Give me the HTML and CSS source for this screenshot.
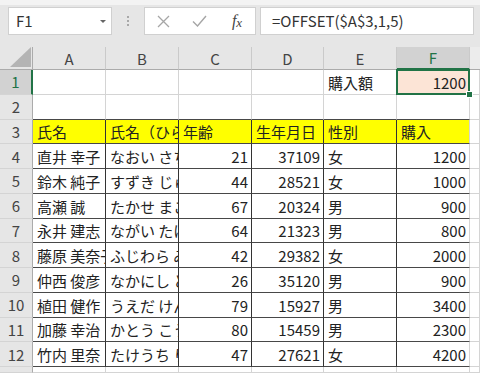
FILE: index.html
```html
<!DOCTYPE html>
<html lang="ja">
<head>
  <meta charset="UTF-8">
  <meta name="viewport" content="width=device-width, initial-scale=1.0">
  <title>OFFSET</title>
  <link rel="stylesheet" href="styles.css">
</head>
<body>
  <!-- Formula bar -->
  <div class="formulaBar">
    <div class="nameBox">F1<span class="arrow"></span></div>
    <div class="grip"><i></i><i></i><i></i></div>
    <div class="fxBox">
      <span class="btn">
        <svg width="13" height="13" viewBox="0 0 13 13"><path d="M1 1L12 12M12 1L1 12" stroke="#a6a6a6" stroke-width="1.3" fill="none"/></svg>
      </span>
      <span class="btn">
        <svg width="15" height="12" viewBox="0 0 15 12"><path d="M1 6.5L5.5 11L14 1" stroke="#a6a6a6" stroke-width="1.4" fill="none"/></svg>
      </span>
      <span class="btn fx">f<span>x</span></span>
    </div>
    <div class="formula">=OFFSET($A$3,1,5)</div>
  </div>

  <!-- Sheet -->
  <div class="sheet">
    <div class="corner"><svg width="21" height="20" viewBox="0 0 21 20"><polygon points="21,0 21,20 0,20" fill="#b4b4b4"/></svg></div>
    <div class="hd">A</div>
    <div class="hd">B</div>
    <div class="hd">C</div>
    <div class="hd">D</div>
    <div class="hd">E</div>
    <div class="hd active">F</div>
    <div class="hd last"></div>

    <div class="rh active">1</div>
    <div class="c"></div>
    <div class="c"></div>
    <div class="c"></div>
    <div class="c"></div>
    <div class="c">購入額</div>
    <div class="c num sel">1200</div>
    <div class="c"></div>

    <div class="rh">2</div>
    <div class="c bb"></div>
    <div class="c bb"></div>
    <div class="c bb"></div>
    <div class="c bb"></div>
    <div class="c bb"></div>
    <div class="c bb"></div>
    <div class="c"></div>

    <div class="rh">3</div>
    <div class="c bx yl">氏名</div>
    <div class="c bx yl">氏名（ひらがな）</div>
    <div class="c bx yl">年齢</div>
    <div class="c bx yl">生年月日</div>
    <div class="c bx yl">性別</div>
    <div class="c bb yl">購入</div>
    <div class="c"></div>

    <div class="rh">4</div>
    <div class="c bx">直井 幸子</div>
    <div class="c bx">なおい さちこ</div>
    <div class="c bx num">21</div>
    <div class="c bx num">37109</div>
    <div class="c bx">女</div>
    <div class="c bb num">1200</div>
    <div class="c"></div>

    <div class="rh">5</div>
    <div class="c bx">鈴木 純子</div>
    <div class="c bx">すずき じゅんこ</div>
    <div class="c bx num">44</div>
    <div class="c bx num">28521</div>
    <div class="c bx">女</div>
    <div class="c bb num">1000</div>
    <div class="c"></div>

    <div class="rh">6</div>
    <div class="c bx">高瀬 誠</div>
    <div class="c bx">たかせ まこと</div>
    <div class="c bx num">67</div>
    <div class="c bx num">20324</div>
    <div class="c bx">男</div>
    <div class="c bb num">900</div>
    <div class="c"></div>

    <div class="rh">7</div>
    <div class="c bx">永井 建志</div>
    <div class="c bx">ながい たけし</div>
    <div class="c bx num">64</div>
    <div class="c bx num">21323</div>
    <div class="c bx">男</div>
    <div class="c bb num">800</div>
    <div class="c"></div>

    <div class="rh">8</div>
    <div class="c bx">藤原 美奈子</div>
    <div class="c bx">ふじわら みなこ</div>
    <div class="c bx num">42</div>
    <div class="c bx num">29382</div>
    <div class="c bx">女</div>
    <div class="c bb num">2000</div>
    <div class="c"></div>

    <div class="rh">9</div>
    <div class="c bx">仲西 俊彦</div>
    <div class="c bx">なかにし としひこ</div>
    <div class="c bx num">26</div>
    <div class="c bx num">35120</div>
    <div class="c bx">男</div>
    <div class="c bb num">900</div>
    <div class="c"></div>

    <div class="rh">10</div>
    <div class="c bx">植田 健作</div>
    <div class="c bx">うえだ けんさく</div>
    <div class="c bx num">79</div>
    <div class="c bx num">15927</div>
    <div class="c bx">男</div>
    <div class="c bb num">3400</div>
    <div class="c"></div>

    <div class="rh">11</div>
    <div class="c bx">加藤 幸治</div>
    <div class="c bx">かとう こうじ</div>
    <div class="c bx num">80</div>
    <div class="c bx num">15459</div>
    <div class="c bx">男</div>
    <div class="c bb num">2300</div>
    <div class="c"></div>

    <div class="rh">12</div>
    <div class="c bx">竹内 里奈</div>
    <div class="c bx">たけうち りな</div>
    <div class="c bx num">47</div>
    <div class="c bx num">27621</div>
    <div class="c bx">女</div>
    <div class="c bb num">4200</div>
    <div class="c"></div>

    <div class="rh"></div>
    <div class="c"></div>
    <div class="c"></div>
    <div class="c"></div>
    <div class="c"></div>
    <div class="c"></div>
    <div class="c"></div>
    <div class="c"></div>
  </div>
</body>
</html>
```

FILE: styles.css
```css
/* General */
body {
  margin: 0;
  width: 480px;
  height: 373px;
  overflow: hidden;
  background: #fff;
  font-family: "Noto Sans CJK JP", "Noto Sans", sans-serif;
  color: #222;
}

/* Formula bar */
.formulaBar {
  display: flex;
  align-items: flex-start;
  height: 40px;
  padding: 2px 6px 0 8px;
  border-top: 5px solid #f3f3f3;
  background: #e6e6e6;
}

.nameBox,
.fxBox,
.formula {
  box-sizing: border-box;
  height: 28px;
  background: #fff;
  border: 1px solid #d0d0d0;
}

.nameBox {
  position: relative;
  width: 104px;
  padding-left: 7px;
  font-size: 15px;
  line-height: 26px;
  color: #333;
}

.arrow {
  position: absolute;
  right: 5px;
  top: 12px;
  border-left: 3px solid transparent;
  border-right: 3px solid transparent;
  border-top: 3px solid #666;
}

.grip {
  width: 32px;
  height: 28px;
  display: flex;
  flex-direction: column;
  align-items: center;
  justify-content: center;
  gap: 2px;
}

.grip i {
  width: 2px;
  height: 2px;
  background: #a8a8a8;
}

.fxBox {
  width: 112px;
  display: flex;
  align-items: center;
}

.btn {
  width: 37px;
  display: flex;
  justify-content: center;
  align-items: center;
}

.fx {
  font-family: "Liberation Serif", serif;
  font-style: italic;
  font-size: 16px;
  color: #444;
  padding-left: 2px;
}

.fx span {
  font-size: 13px;
  position: relative;
  top: 2px;
}

.formula {
  flex: 1;
  margin-left: 4px;
  padding-left: 11px;
  font-size: 15px;
  line-height: 25px;
  color: #333;
}

/* Sheet grid */
.sheet {
  display: grid;
  grid-template-columns: 33px 73px 73px 73px 72px 73px 73px 1fr;
  grid-template-rows: 23px repeat(12, 24.75px) 1fr;
  height: 326px;
  font-size: 15px;
}

.corner {
  display: flex;
  justify-content: flex-end;
  align-items: flex-end;
  padding: 0 1px 2px 0;
  background: #e6e6e6;
  border-right: 1px solid #ababab;
  border-bottom: 1px solid #ababab;
}

.hd {
  display: flex;
  justify-content: center;
  align-items: center;
  background: #e6e6e6;
  color: #444;
  border-right: 1px solid #cacaca;
  border-bottom: 1px solid #ababab;
}

.hd.last {
  border-right: none;
  background: #ececec;
}

.hd.active {
  background: #d2d2d2;
  color: #217346;
  border-bottom: 2px solid #217346;
}

.rh {
  display: flex;
  justify-content: center;
  align-items: center;
  background: #e6e6e6;
  color: #444;
  border-right: 1px solid #ababab;
  border-bottom: 1px solid #d4d4d4;
}

.rh.active {
  background: #d2d2d2;
  color: #217346;
  border-right: 2px solid #217346;
}

.sheet > div {
  box-sizing: border-box;
  min-width: 0;
  min-height: 0;
}

.c {
  display: flex;
  align-items: center;
  padding: 1px 3px 0 4px;
  overflow: hidden;
  white-space: nowrap;
  border-right: 1px solid #d4d4d4;
  border-bottom: 1px solid #d4d4d4;
}

.num {
  justify-content: flex-end;
}

/* Table borders */
.bx {
  border-right-color: #333;
  border-bottom-color: #484848;
}

.bb {
  border-bottom-color: #484848;
}

.yl {
  background: #ffff00;
}

/* Active cell */
.sel {
  position: relative;
  overflow: visible;
  background: #fce4d6;
}

.sel::after {
  content: "";
  position: absolute;
  left: -1px;
  top: -1px;
  right: -1px;
  bottom: -1px;
  border: 2px solid #217346;
}

.sel::before {
  content: "";
  position: absolute;
  right: -4px;
  bottom: -4px;
  width: 5px;
  height: 5px;
  background: #217346;
  border: 1px solid #fff;
  z-index: 2;
}
```
